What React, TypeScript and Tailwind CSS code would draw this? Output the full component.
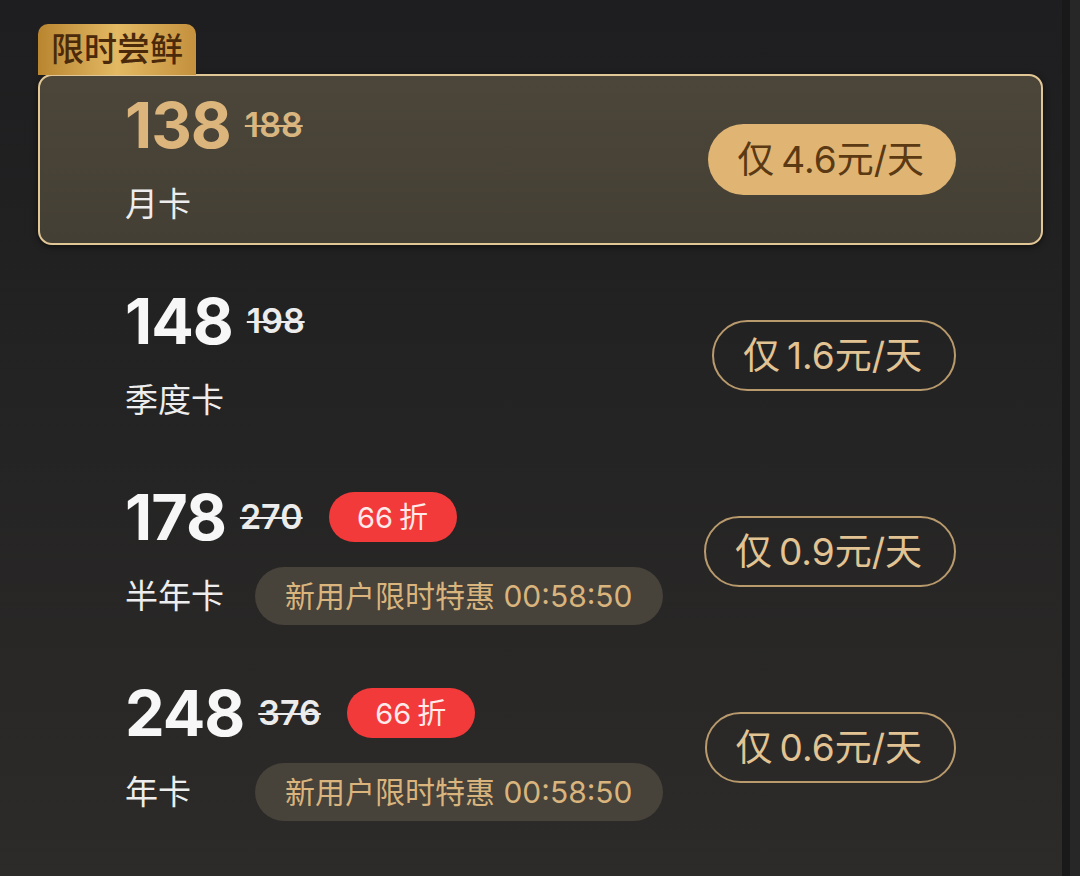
import React from 'react';

type Plan = {
  price: string;
  original: string;
  name: string;
  perDay: string;
  discount?: string;
  promo?: string;
};

const plans: Plan[] = [
  { price: '138', original: '188', name: '月卡', perDay: '4.6' },
  { price: '148', original: '198', name: '季度卡', perDay: '1.6' },
  { price: '178', original: '270', name: '半年卡', perDay: '0.9', discount: '66折', promo: '新用户限时特惠 00:58:50' },
  { price: '248', original: '376', name: '年卡', perDay: '0.6', discount: '66折', promo: '新用户限时特惠 00:58:50' },
];

function PlanRow({ plan, selected }: { plan: Plan; selected: boolean }) {
  return (
    <div
      className={`flex h-[171px] items-start justify-between rounded-[14px] border-2 px-[85px] ${
        selected
          ? 'border-[#e2c796] bg-gradient-to-b from-[#4c463a] to-[#443f34] shadow-[0_2px_6px_rgba(0,0,0,0.5)]'
          : 'border-transparent'
      }`}
    >
      <div className="flex flex-col pt-[17px]">
        <div className="flex h-[64px] items-center">
          <span
            className={`text-[63px] font-bold leading-none tracking-[-1px] ${
              selected ? 'text-[#dcb57c]' : 'text-[#f7f7f7]'
            }`}
          >
            {plan.price}
          </span>
          <span
            className={`ml-[14px] text-[34px] font-semibold leading-none line-through decoration-2 ${
              selected ? 'text-[#d9b57f]' : 'text-[#ececec]'
            }`}
          >
            {plan.original}
          </span>
          {plan.discount && (
            <span className="ml-[26px] flex h-[50px] w-[128px] items-center justify-center rounded-full bg-[#f23a3a] text-[29px] leading-none text-[#ffe9e9]">
              {plan.discount.slice(0, 2)}
              <span className="ml-[6px]">{plan.discount.slice(2)}</span>
            </span>
          )}
        </div>
        <div className="mt-[18px] flex h-[58px] items-center">
          <span className="w-[130px] text-[33px] leading-none text-[#ededed]">{plan.name}</span>
          {plan.promo && (
            <span className="flex h-[58px] items-center rounded-full bg-[#47423a] px-[30px] text-[30px] leading-none text-[#d9b47d]">
              {plan.promo}
            </span>
          )}
        </div>
      </div>
      <div
        className={`flex h-[71px] items-center self-center rounded-full pl-[29px] pr-[32px] text-[37px] leading-none ${
          selected
            ? 'bg-[#e0b574] text-[#5a3913]'
            : 'border-2 border-[#b99a6d] text-[#e2c393]'
        }`}
      >
        <span>仅</span>
        <span className="ml-[7px]">{plan.perDay}元/天</span>
      </div>
    </div>
  );
}

export default function App() {
  return (
    <div
      className="flex h-[876px] w-[1080px] overflow-hidden bg-gradient-to-b from-[#1e1d1f] to-[#2c2b29]"
      style={{ fontFamily: 'Inter, "Noto Sans CJK SC", sans-serif' }}
    >
      <div className="flex w-[1062px] flex-col pl-[38px] pr-[19px] pt-[24px]">
        <div className="relative z-10 -mb-[1px] flex h-[51px] w-[158px] items-center justify-center rounded-t-[10px] bg-gradient-to-r from-[#b9852f] via-[#e3b964] to-[#c4913d] text-[33px] font-medium leading-none text-[#4b2a0b]">
          限时尝鲜
        </div>
        <div className="flex flex-col gap-[25px]">
          {plans.map((plan, i) => (
            <PlanRow key={plan.price} plan={plan} selected={i === 0} />
          ))}
        </div>
      </div>
      <div className="w-[8px] bg-[#19191a]" />
      <div className="flex-1 bg-[#272727]" />
    </div>
  );
}
